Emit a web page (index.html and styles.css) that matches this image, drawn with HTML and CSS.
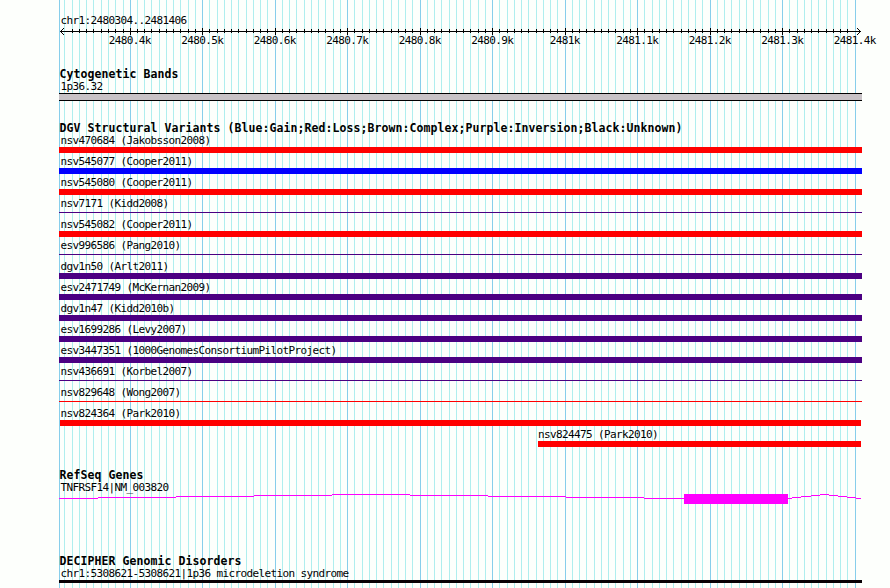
FILE: index.html
```html
<!DOCTYPE html>
<html lang="en">
<head>
<meta charset="utf-8">
<title>chr1:2480304..2481406</title>
<link rel="stylesheet" href="styles.css">
</head>
<body>
<svg class="grid" width="890" height="588" shape-rendering="crispEdges" aria-hidden="true"><path id="minor"/><path id="major"/></svg>
<main class="browser">
  <header class="ruler">
    <div class="label">chr1:2480304..2481406</div>
    <svg class="axis" width="804" height="9" shape-rendering="crispEdges" aria-hidden="true">
      <path class="ink" d="M1 4h801v1H1zM2 3h1v1h-1zM2 5h1v1h-1zM3 2h1v1h-1zM3 6h1v1h-1zM4 1h1v1h-1zM4 7h1v1h-1zM800 3h1v1h-1zM800 5h1v1h-1zM799 2h1v1h-1zM799 6h1v1h-1zM798 1h1v1h-1zM798 7h1v1h-1z"/>
      <path class="ink" id="ticks"/>
    </svg>
    <div class="scale"><span>2480.4k</span><span>2480.5k</span><span>2480.6k</span><span>2480.7k</span><span>2480.8k</span><span>2480.9k</span><span>2481k</span><span>2481.1k</span><span>2481.2k</span><span>2481.3k</span><span>2481.4k</span></div>
  </header>
  <section class="track cyto">
    <h2>Cytogenetic Bands</h2>
    <div class="label">1p36.32</div>
    <div class="band"></div>
  </section>
  <section class="track variants">
    <h2>DGV Structural Variants (Blue:Gain;Red:Loss;Brown:Complex;Purple:Inversion;Black:Unknown)</h2>
    <div class="row loss"><div class="label">nsv470684 (Jakobsson2008)</div><i></i></div>
    <div class="row gain"><div class="label">nsv545077 (Cooper2011)</div><i></i></div>
    <div class="row loss"><div class="label">nsv545080 (Cooper2011)</div><i></i></div>
    <div class="row inversion thin"><div class="label">nsv7171 (Kidd2008)</div><i></i></div>
    <div class="row loss"><div class="label">nsv545082 (Cooper2011)</div><i></i></div>
    <div class="row inversion thin"><div class="label">esv996586 (Pang2010)</div><i></i></div>
    <div class="row inversion"><div class="label">dgv1n50 (Arlt2011)</div><i></i></div>
    <div class="row inversion"><div class="label">esv2471749 (McKernan2009)</div><i></i></div>
    <div class="row inversion"><div class="label">dgv1n47 (Kidd2010b)</div><i></i></div>
    <div class="row inversion"><div class="label">esv1699286 (Levy2007)</div><i></i></div>
    <div class="row inversion"><div class="label">esv3447351 (1000GenomesConsortiumPilotProject)</div><i></i></div>
    <div class="row inversion thin"><div class="label">nsv436691 (Korbel2007)</div><i></i></div>
    <div class="row loss thin"><div class="label">nsv829648 (Wong2007)</div><i></i></div>
    <div class="row loss inset"><div class="label">nsv824364 (Park2010)</div><i></i></div>
    <div class="row loss partial"><div class="label">nsv824475 (Park2010)</div><i></i></div>
  </section>
  <section class="track genes">
    <h2>RefSeq Genes</h2>
    <div class="label">TNFRSF14|NM_003820</div>
    <svg class="gene" width="803" height="10" shape-rendering="crispEdges" aria-hidden="true">
      <path d="M0 4h39v1H0zM39 3h78v1h-78zM117 2h78v1h-78zM195 1h78v1h-78zM273 0h78v1h-78zM351 1h78v1h-78zM429 2h78v1h-78zM507 3h78v1h-78zM585 4h40v1h-40zM625 0h104v10H625zM729 4h4v1h-4zM733 3h9v1h-9zM742 2h10v1h-10zM752 1h9v1h-9zM761 0h9v1h-9zM770 1h9v1h-9zM779 2h9v1h-9zM788 3h9v1h-9zM797 4h5v1h-5z"/>
    </svg>
  </section>
  <section class="track disorders">
    <h2>DECIPHER Genomic Disorders</h2>
    <div class="label">chr1:5308621-5308621|1p36 microdeletion syndrome</div>
    <div class="region"></div>
  </section>
</main>
<script src="grid.js"></script>
</body>
</html>
```
FILE: grid.js
```js
// Tick columns in page pixels: one per 10 bases, a major one per 100 bases.
const majors = [130, 202, 275, 347, 420, 492, 565, 637, 710, 782, 855];
const minors = [64, 72, 79, 86, 93, 101, 108, 115, 123];
for (let i = 0; i < majors.length - 1; i++) {
  const start = i % 2 ? majors[i] + 0.5 : majors[i];
  for (let k = 1; k < 10; k++) minors.push(Math.floor(start + k * 7.25));
}
const columns = (xs, y, h, dx = 0) =>
  xs.map(x => `M${x - dx} ${y}h1v${h}h-1z`).join("");
document.getElementById("minor").setAttribute("d", columns(minors, 0, 588));
document.getElementById("major").setAttribute("d", columns([59, ...majors], 0, 588));
// The outermost ticks give way to the arrowheads.
document.getElementById("ticks").setAttribute("d",
  columns(minors.slice(1), 2, 4, 59) + columns(majors.slice(0, -1), 1, 7, 59));
```
FILE: styles.css
```css
* { box-sizing: border-box; }
body {
  margin: 0;
  width: 890px;
  height: 588px;
  overflow: hidden;
  background: #fdfffc;
  color: #000;
  font: 11px/12px "DejaVu Sans Mono", monospace;
}
.grid { position: absolute; inset: 0; z-index: -1; }
#minor { fill: #afeeee; }
#major { fill: #87ceeb; }
.browser { width: 803px; margin-left: 59px; padding-top: 15px; }
.label { height: 12px; padding-left: 1.5px; letter-spacing: -0.622px; white-space: nowrap; }
h2 { margin: 0; height: 13px; padding-left: 0.5px; font-size: 11.5px; line-height: 13px; font-weight: bold; letter-spacing: 0.077px; white-space: nowrap; }
svg { display: block; }
.ruler { height: 53px; }
.axis { overflow: visible; fill: #000; }
.scale { display: flex; width: 830px; margin: -1px 0 0 34.5px; letter-spacing: -0.622px; }
.scale span { width: 72.5px; text-align: center; flex: none; }
.cyto { height: 54px; }
.band { height: 8px; background: #c8c2c6; border: solid #000; border-width: 1px 0; }
.variants { height: 347px; }
.row { height: 21px; }
.row i { display: block; height: 6px; background: currentColor; }
.row .label { color: #000; }
.loss { color: #f00; }
.gain { color: #00f; }
.inversion { color: #4b0082; }
.thin i { height: 1px; margin-top: 2px; }
.inset i { margin: 0 1px; }
.partial { margin-left: 479px; margin-right: 1px; }
.partial .label { padding-left: 0; }
.genes { height: 86px; }
.gene { fill: #f0f; }
.region { height: 3px; background: #080004; }
```
